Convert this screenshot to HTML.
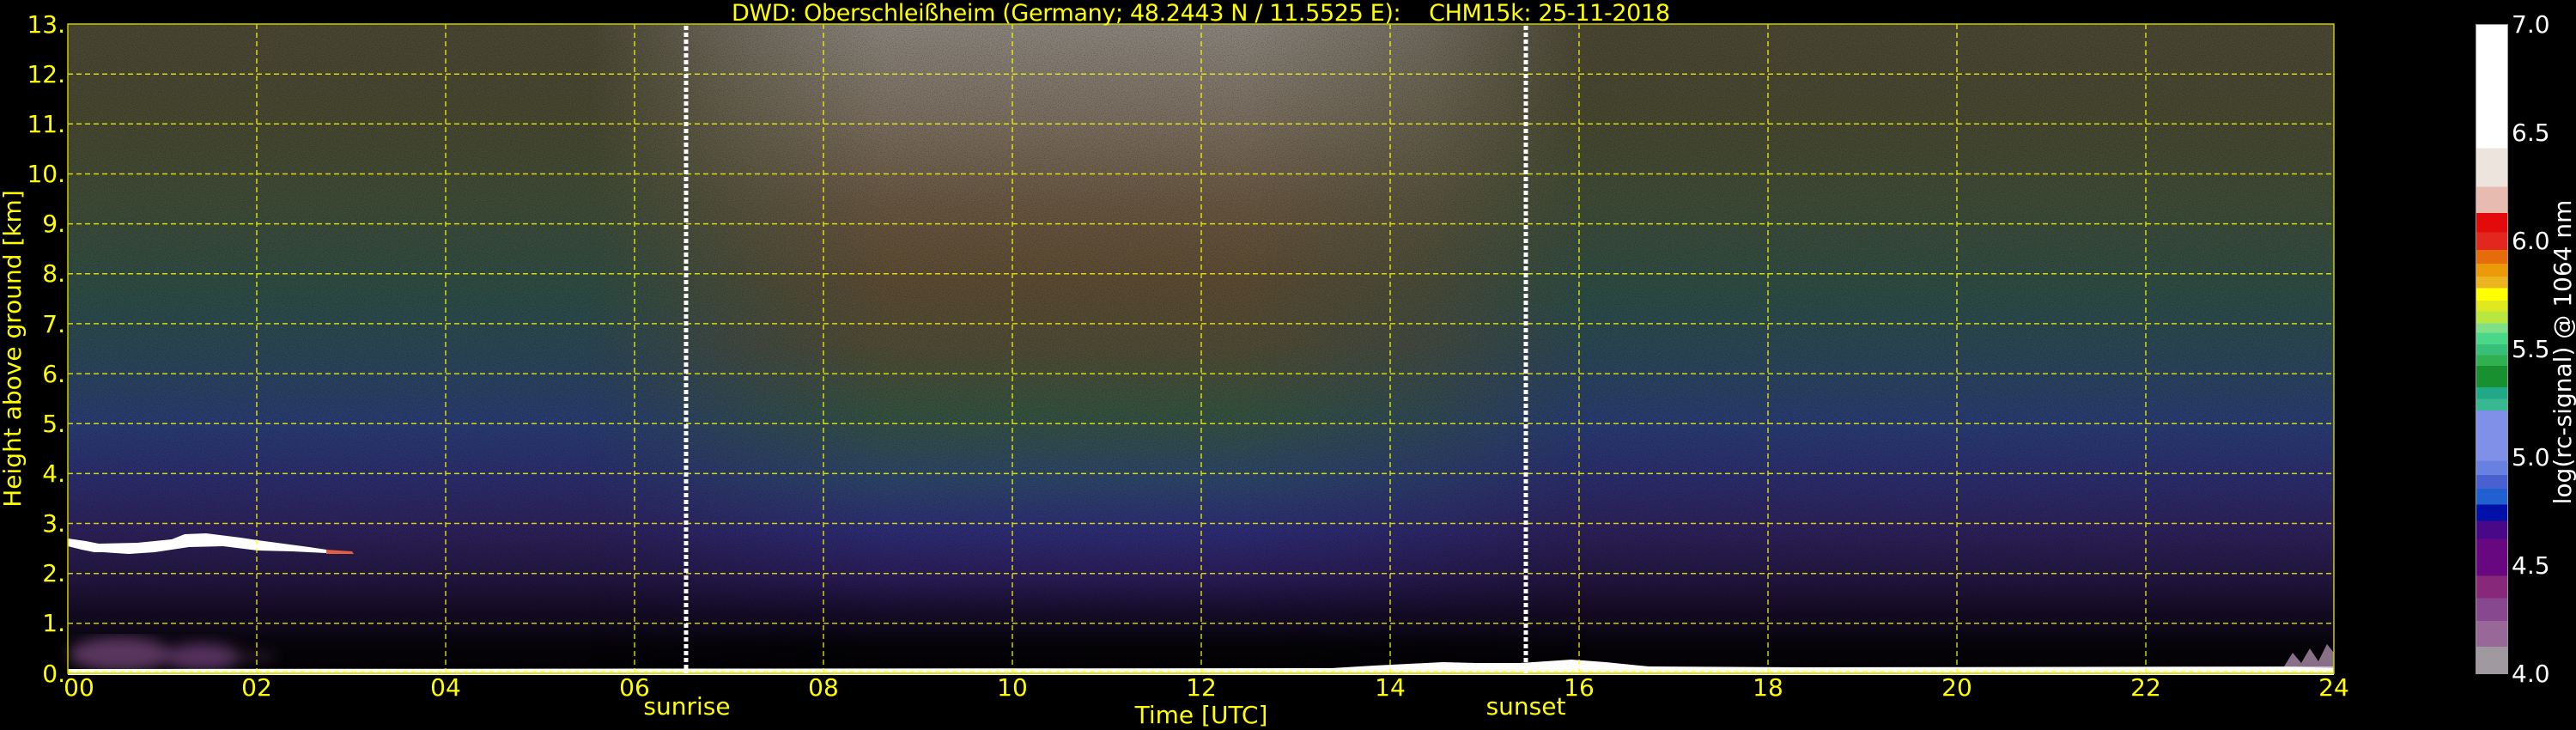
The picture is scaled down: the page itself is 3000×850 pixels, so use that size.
<!DOCTYPE html>
<html><head><meta charset="utf-8"><style>
html,body{margin:0;padding:0;background:#000;width:3000px;height:850px;overflow:hidden}
#plot{position:absolute;left:79px;top:28px;width:2639px;height:756px;
background:linear-gradient(to bottom,#4a4634 0%,#46472f 15%,#3d4a36 28%,#2c4b44 42%,#2a4458 52%,#283a70 62%,#2a2c6a 70%,#2c2058 78%,#221640 85%,#130a22 91%,#050308 96%,#000 100%)}
#mid{position:absolute;left:79px;top:28px;width:2639px;height:756px;
background:linear-gradient(to bottom,#8a847c 0%,#7a6e60 14%,#665540 28%,#5a4a32 40%,#4e4a34 50%,#34503e 60%,#2c4466 70%,#2c2c72 78%,#2a1c58 85%,#140c28 91%,#040206 96%,#000 100%);
-webkit-mask-image:linear-gradient(to right,transparent 23%,rgba(0,0,0,.6) 30%,#000 36%,#000 52%,rgba(0,0,0,.6) 60%,transparent 67%);
mask-image:linear-gradient(to right,transparent 23%,rgba(0,0,0,.6) 30%,#000 36%,#000 52%,rgba(0,0,0,.6) 60%,transparent 67%)}
#cb{position:absolute;left:2883px;top:28px;width:38px;height:757px;border:1px solid #999;box-sizing:border-box;
background:linear-gradient(to bottom,#fff 0%,#fff 19%,#ede5dd 19%,#ede5dd 25%,#e8bbb0 25%,#e8bbb0 29%,#e20a0a 29%,#e20a0a 32%,#e2281e 32%,#e2281e 34.7%,#e66b0a 34.7%,#e66b0a 36.8%,#ec9a0a 36.8%,#ec9a0a 38.8%,#ecb520 38.8%,#ecb520 40.6%,#ffff00 40.6%,#ffff00 42.5%,#e0e820 42.5%,#e0e820 44.2%,#b8e840 44.2%,#b8e840 46%,#80e088 46%,#80e088 47.5%,#48d888 47.5%,#48d888 49.3%,#38c078 49.3%,#38c078 50.9%,#30b050 50.9%,#30b050 52.6%,#189030 52.6%,#189030 55.9%,#20a888 55.9%,#20a888 57.7%,#38b890 57.7%,#38b890 59.5%,#8090e8 59.5%,#8090e8 67.2%,#6880e0 67.2%,#6880e0 69.4%,#4860d0 69.4%,#4860d0 71.5%,#2060d0 71.5%,#2060d0 74%,#0010a8 74%,#0010a8 76.5%,#480888 76.5%,#480888 79.3%,#680880 79.3%,#680880 85%,#882878 85%,#882878 88.4%,#884890 88.4%,#884890 91.9%,#986898 91.9%,#986898 95.9%,#a09aa0 95.9%,#a09aa0 100%)}
svg{position:absolute;left:0;top:0}
text{font-family:"DejaVu Sans","Liberation Sans",sans-serif}
</style></head><body>
<div id="plot"></div><div id="mid"></div><div id="cb"></div>
<svg width="3000" height="850" viewBox="0 0 3000 850">
<defs>
<filter id="n" x="0" y="0" width="100%" height="100%"><feTurbulence type="fractalNoise" baseFrequency="0.9" numOctaves="1" seed="3"/><feColorMatrix values="0 0 0 0 0  0 0 0 0 0  0 0 0 0 0  0 0 0 -2.2 1.2"/></filter>
<filter id="b"><feGaussianBlur stdDeviation="8"/></filter>
</defs>
<rect x="79" y="28" width="2639" height="690" filter="url(#n)" opacity="0.35"/>
<g opacity="0.55" filter="url(#b)">
<ellipse cx="140" cy="762" rx="60" ry="20" fill="#a060a8"/>
<ellipse cx="235" cy="765" rx="45" ry="16" fill="#9a58a8"/>
<rect x="260" y="760" width="60" height="10" fill="#7a5080" opacity="0.6"/>
</g>
<path d="M79,627 L100,630 L115,633 L160,632 L200,628 L215,622 L240,621 L280,626 L300,629 L330,633 L360,637 L380,640 L380,644 L340,642 L300,641 L260,636 L220,637 L180,643 L150,645 L120,643 L110,643 L95,640 L79,636 Z" fill="#fff"/>
<path d="M380,640 L410,642 L412,645 L380,645 Z" fill="#e06040"/>
<path d="M79,779 L1550,778 L1600,775 L1640,773 L1680,771 L1720,772 L1770,772 L1830,768 L1870,771 L1920,776 L2100,777 L2718,776 L2718,786 L79,786 Z" fill="#fff"/>
<path d="M2660,776 L2670,760 L2680,772 L2690,755 L2700,770 L2710,750 L2718,760 L2718,778 Z" fill="#c0a0c0" opacity="0.7"/>
<g stroke="#ffff00" stroke-width="1.5" stroke-dasharray="6,4" fill="none" opacity="0.8">
<path d="M79,725.8H2718M79,667.7H2718M79,609.5H2718M79,551.4H2718M79,493.2H2718M79,435.1H2718M79,376.9H2718M79,318.8H2718M79,260.6H2718M79,202.5H2718M79,144.3H2718M79,86.2H2718M79,782H2718"/>
<path d="M299,28V784M519,28V784M739,28V784M959,28V784M1179,28V784M1399,28V784M1619,28V784M1839,28V784M2059,28V784M2279,28V784M2499,28V784"/>
</g>
<rect x="79" y="28" width="2639" height="756" fill="none" stroke="#cccc00" stroke-width="1.5"/>
<g stroke="#fff" stroke-width="5" stroke-dasharray="5,3">
<path d="M799,30V784M1777,30V784"/>
</g>
<g fill="#ffff00" font-size="28">
<text x="852" y="24" font-size="27" textLength="1093" xml:space="preserve">DWD: Oberschleißheim (Germany; 48.2443 N / 11.5525 E):    CHM15k: 25-11-2018</text>
<g text-anchor="end">
<text x="76" y="38">13.</text><text x="76" y="96">12.</text><text x="76" y="154">11.</text><text x="76" y="212">10.</text><text x="76" y="270">9.</text><text x="76" y="328">8.</text><text x="76" y="387">7.</text><text x="76" y="445">6.</text><text x="76" y="503">5.</text><text x="76" y="561">4.</text><text x="76" y="619">3.</text><text x="76" y="677">2.</text><text x="76" y="735">1.</text><text x="76" y="794">0.</text>
</g>
<g text-anchor="middle">
<text x="92" y="810">00</text><text x="299" y="810">02</text><text x="519" y="810">04</text><text x="739" y="810">06</text><text x="959" y="810">08</text><text x="1179" y="810">10</text><text x="1399" y="810">12</text><text x="1619" y="810">14</text><text x="1839" y="810">16</text><text x="2059" y="810">18</text><text x="2279" y="810">20</text><text x="2499" y="810">22</text><text x="2718" y="810">24</text>
<text x="800" y="832">sunrise</text><text x="1399" y="842">Time [UTC]</text><text x="1777" y="832">sunset</text>
<text transform="translate(24,406) rotate(-90)">Height above ground [km]</text>
</g>
</g>
<g fill="#fff" font-size="28">
<text x="2925" y="38">7.0</text><text x="2925" y="164">6.5</text><text x="2925" y="290">6.0</text><text x="2925" y="416">5.5</text><text x="2925" y="542">5.0</text><text x="2925" y="668">4.5</text><text x="2925" y="794">4.0</text>
<text text-anchor="middle" transform="translate(2994,410) rotate(-90)">log(rc-signal) @ 1064 nm</text>
</g>
</svg>
</body></html>
